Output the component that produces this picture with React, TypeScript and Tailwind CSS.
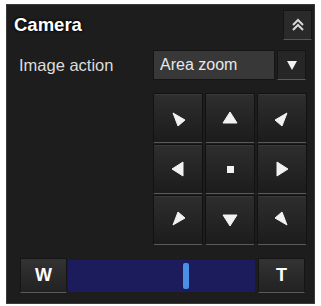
import React from "react";

const font = { fontFamily: '"Liberation Sans", Arial, sans-serif' };

// direction marks, drawn in a 20x20 box
const Tri: React.FC<{ points: string }> = ({ points }) => (
  <svg width="20" height="20" viewBox="0 0 20 20">
    <polygon points={points} fill="#f2f2f2" strokeLinejoin="round" stroke="#f2f2f2" strokeWidth="1" />
  </svg>
);

const PadButton: React.FC<{ children: React.ReactNode }> = ({ children }) => (
  <button className="flex h-[50px] w-[50px] items-center justify-center rounded-[2px] border border-[#111] border-b-[#5a5a5a] bg-gradient-to-b from-[#2e2e2e] to-[#1c1c1c] shadow-[inset_0_1px_0_#3a3a3a]">
    {children}
  </button>
);

export default function App() {
  const pad: React.ReactNode[] = [
    <Tri key="ul" points="5,5 17,12 10,18" />,
    <Tri key="u" points="10,4 17,15 3,15" />,
    <Tri key="ur" points="15,5 3,12 10,18" />,
    <Tri key="l" points="4,10 15,3 15,17" />,
    <span key="c" className="block h-[7px] w-[7px] bg-[#f2f2f2]" />,
    <Tri key="r" points="16,10 5,3 5,17" />,
    <Tri key="dl" points="5,15 17,8 10,2" />,
    <Tri key="d" points="10,16 17,5 3,5" />,
    <Tri key="dr" points="15,15 3,8 10,2" />,
  ];

  return (
    <div className="h-[306px] w-[321px] bg-white pl-[6px] pt-[4px]" style={font}>
      <div className="h-[300px] w-[309px] border border-[#3a3a3a] bg-[#1d1d1d]">
        {/* header */}
        <div className="flex items-center justify-between pl-[7px] pr-[2px] pt-[5px]">
          <span
            className="text-[18.5px] font-bold text-white"
            style={{ textShadow: "0 0 2px #000, 0 0 3px #000" }}
          >
            Camera
          </span>
          <button className="flex h-[30px] w-[29px] items-center justify-center border border-[#151515] border-b-[#555] bg-[#2a2a2a]">
            <svg width="14" height="14" viewBox="0 0 14 14">
              <polyline points="2,7 7,2 12,7" fill="none" stroke="#d8d8d8" strokeWidth="2" />
              <polyline points="2,12 7,7 12,12" fill="none" stroke="#d8d8d8" strokeWidth="2" />
            </svg>
          </button>
        </div>

        {/* image action */}
        <div className="mt-[10px] flex items-center">
          <span className="w-[146px] pl-[12px] text-[16.5px] text-[#dcdcdc]">Image action</span>
          <div className="flex h-[30px] w-[122px] items-center border border-[#151515] bg-[#383838] pl-[6px] text-[16px] text-[#e8e8e8]">
            Area zoom
          </div>
          <button className="ml-[2px] flex h-[30px] w-[29px] items-center justify-center border border-[#151515] border-b-[#5a5a5a] bg-[#262626]">
            <svg width="12" height="12" viewBox="0 0 12 12">
              <polygon points="1,2 11,2 6,11" fill="#f2f2f2" />
            </svg>
          </button>
        </div>

        {/* direction pad */}
        <div className="ml-[146px] mt-[13px] grid grid-cols-[50px_50px_50px] gap-x-[2px] gap-y-[1px]">
          {pad.map((p, i) => (
            <PadButton key={i}>{p}</PadButton>
          ))}
        </div>

        {/* zoom bar */}
        <div className="ml-[13px] mt-[13px] flex items-center">
          <button className="flex h-[35px] w-[47px] items-center justify-center border border-[#151515] border-b-[#5a5a5a] bg-gradient-to-b from-[#333] to-[#222] text-[18px] font-bold text-white">
            W
          </button>
          <div className="relative ml-[1px] h-[32px] w-[187px] bg-[#1c1c5c]">
            <div className="absolute left-[115px] top-[3px] h-[26px] w-[6px] rounded-[2px] bg-[#4a90e6]" />
          </div>
          <button className="ml-[3px] flex h-[35px] w-[47px] items-center justify-center border border-[#151515] border-b-[#5a5a5a] bg-gradient-to-b from-[#333] to-[#222] text-[18px] font-bold text-white">
            T
          </button>
        </div>
      </div>
    </div>
  );
}
